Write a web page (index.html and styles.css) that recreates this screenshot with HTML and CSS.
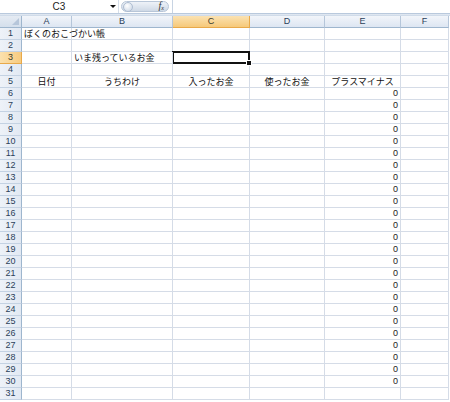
FILE: index.html
```html
<!DOCTYPE html>
<html lang="ja">
<head>
<meta charset="utf-8">
<link rel="stylesheet" href="styles.css">
</head>
<body>
<div class="app">
  <div class="fbar">
    <div class="namebox"><span class="name">C3</span><span class="arrow"></span></div>
    <div class="pill"><span class="knob"></span><span class="fx">f<sub>x</sub></span></div>
    <div class="finput"></div>
  </div>
  <div class="sep"></div>
  <div class="sheet" id="sheet"></div>
</div>
<script src="app.js"></script>
</body>
</html>
```
FILE: styles.css
```css
* { box-sizing: border-box; }
html, body { margin: 0; padding: 0; background: #fff; }
body { width: 450px; height: 402px; overflow: hidden; font-family: "Noto Sans CJK JP", "Noto Sans", sans-serif; }
.app { width: 450px; }
.fbar { height: 14px; display: flex; background: #fff; border-bottom: 1px solid #b9c9dd; }
.namebox { width: 119px; position: relative; display: flex; align-items: center; justify-content: center; border-right: 1px solid #d6dfea; }
.name { font-family: "Liberation Sans", sans-serif; font-size: 10px; color: #222; margin-left: 0; }
.arrow { position: absolute; left: 110px; top: 5px; width: 0; height: 0; border-left: 3px solid transparent; border-right: 3px solid transparent; border-top: 3px solid #111; }
.pill { width: 48px; margin: 1px 3px 1px 2px; border-radius: 6px; background: linear-gradient(#eef2f8, #cfd9e6); border: 1px solid #b8c6d8; display: flex; align-items: center; justify-content: space-between; padding: 0 4px 0 1px; }
.knob { width: 10px; height: 10px; border-radius: 50%; background: radial-gradient(circle at 40% 35%, #ffffff, #c7d3e3); border: 1px solid #aebdd2; }
.fx { font-family: "Liberation Serif", serif; font-style: italic; font-size: 10px; color: #333; line-height: 10px; }
.fx sub { font-size: 6px; vertical-align: -1px; }
.finput { flex: 1; border-left: 1px solid #c8d4e3; }
.sep { height: 2px; background: linear-gradient(#e6ecf4, #c9d6e6); }
.sheet { display: grid; grid-template-columns: 22px 50px 101px 77px 75px 76px 48px 1px; grid-auto-rows: 12px; }
.c { border-right: 1px solid #d5dce7; border-bottom: 1px solid #d5dce7; font-size: 9px; line-height: 11px; color: #111; white-space: nowrap; position: relative; padding: 0 2px; }
.h { background: linear-gradient(#f2f5fa, #dde6f2); border-right: 1px solid #b5c6da; border-bottom: 1px solid #9eb6ce; font-family: "Liberation Sans", sans-serif; font-size: 9px; line-height: 11px; color: #2b3f5a; text-align: center; }
.corner { background: linear-gradient(#e5ebf3, #d4dfec); border-right: 1px solid #9eb6ce; border-bottom: 1px solid #9eb6ce; position: relative; }
.corner::after { content: ""; position: absolute; right: 2px; bottom: 2px; width: 0; height: 0; border-left: 7px solid transparent; border-bottom: 7px solid #b6c6da; }
.rh { background: linear-gradient(90deg, #eef2f8, #e2e9f3); border-right: 1px solid #9eb6ce; border-bottom: 1px solid #c4d2e3; text-align: center; padding: 0; }
.sel { background: linear-gradient(#fbe2b2, #f6c97a); border-color: #e8a94a; color: #3b3b2b; }
.rh.sel { background: linear-gradient(90deg, #fbe1ae, #f7cb80); }
.edge { border: none; background: #fff; }
.ov { overflow: visible; z-index: 2; }
.ctr { text-align: center; }
.num { text-align: right; font-family: "Liberation Sans", sans-serif; color: #222; }
.active::after { content: ""; position: absolute; left: -1px; top: -1px; right: -1px; bottom: -1px; border: 2px solid #111; }
.active::before { content: ""; position: absolute; right: -3px; bottom: -3px; width: 4px; height: 4px; background: #111; border: 1px solid #fff; z-index: 3; }
```
FILE: app.js
```js
(function () {
  var sheet = document.getElementById('sheet');
  var cols = ['A', 'B', 'C', 'D', 'E', 'F'];
  function cell(cls, text) {
    var d = document.createElement('div');
    d.className = cls;
    if (text !== undefined) d.textContent = text;
    sheet.appendChild(d);
    return d;
  }
  cell('corner');
  cols.forEach(function (c) { cell('h' + (c === 'C' ? ' sel' : ''), c); });
  cell('edge');
  var data = {
    '1A': ['ぼくのおこづかい帳', 'ov'],
    '3B': ['いま残っているお金', 'ov'],
    '5A': ['日付', 'ctr'],
    '5B': ['うちわけ', 'ctr'],
    '5C': ['入ったお金', 'ctr'],
    '5D': ['使ったお金', 'ctr'],
    '5E': ['プラスマイナス', 'ctr']
  };
  for (var r = 1; r <= 31; r++) {
    cell('c rh h' + (r === 3 ? ' sel' : ''), String(r));
    cols.forEach(function (c) {
      var key = r + c;
      var cls = 'c';
      var txt = '';
      if (data[key]) { txt = data[key][0]; cls += ' ' + data[key][1]; }
      if (c === 'E' && r >= 6 && r <= 30) { txt = '0'; cls += ' num'; }
      if (key === '3C') cls += ' active';
      cell(cls, txt);
    });
    cell('edge');
  }
})();
```
